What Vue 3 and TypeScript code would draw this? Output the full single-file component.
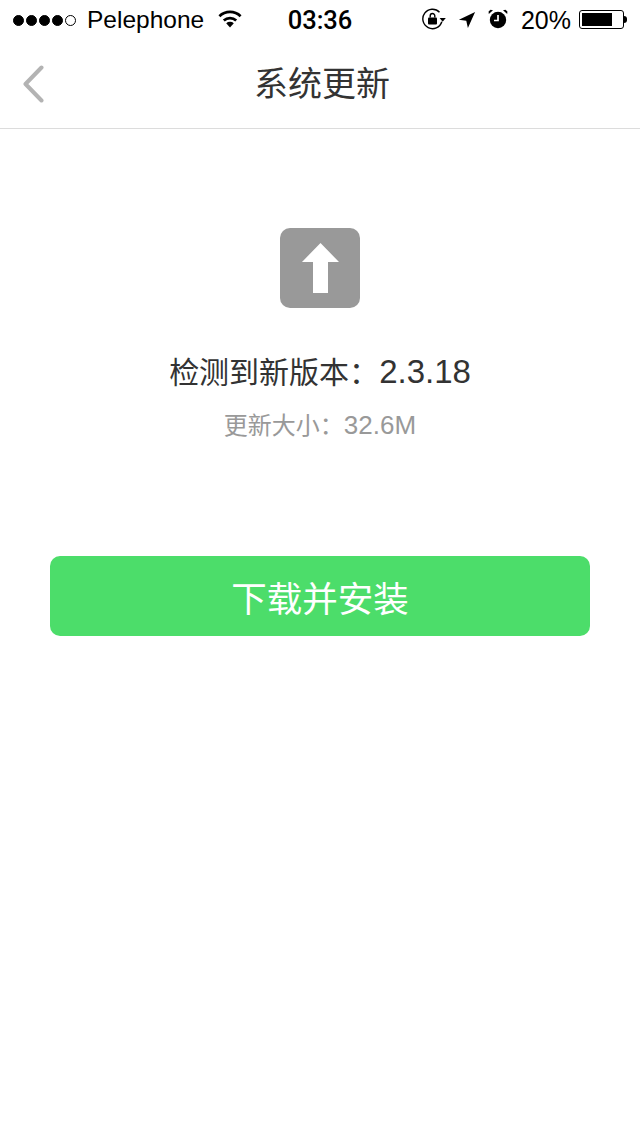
<script setup lang="ts">
const carrierDots = [true, true, true, true, false]
const version = '2.3.18'
const size = '32.6M'
</script>

<template>
  <div class="screen">
    <div class="status-bar">
      <div class="status-left">
        <div class="dots">
          <span v-for="(on, i) in carrierDots" :key="i" class="dot" :class="{ on }"></span>
        </div>
        <span class="carrier">Pelephone</span>
        <svg class="wifi" width="26" height="18" viewBox="0 0 26 18">
          <path d="M13 17.5 9.2 13.2a5.6 5.6 0 0 1 7.6 0Z" fill="#000" />
          <path d="M6.8 10.6a9 9 0 0 1 12.4 0" fill="none" stroke="#000" stroke-width="2.7" />
          <path d="M2.400 6.200a15.4 15.4 0 0 1 21.2 0" fill="none" stroke="#000" stroke-width="2.7" />
        </svg>
      </div>
      <div class="status-time">03:36</div>
      <div class="status-right">
        <svg class="lock" width="24" height="22" viewBox="0 0 24 22">
          <path d="M19.800 13.800A9.700 9.700 0 1 1 17.500 4.200" fill="none" stroke="#000" stroke-width="1.4" />
          <path d="M17.600 10h6.200l-3.100 3.800Z" fill="#000" />
          <rect x="6" y="9.500" width="9" height="7" rx="1" fill="#000" />
          <path d="M8.200 9.500V7.800a2.300 2.300 0 0 1 4.600 0V9.500" fill="none" stroke="#000" stroke-width="1.4" />
        </svg>
        <svg class="arrow" width="18" height="18" viewBox="0 0 20 20">
          <path d="M19 1 1 9.600l8.200 1.200L11 19Z" fill="#000" />
        </svg>
        <svg class="alarm" width="20" height="20" viewBox="0 0 20 20">
          <circle cx="10" cy="11" r="8.2" fill="#000" />
          <path d="M10 6v5.500H6" fill="none" stroke="#fff" stroke-width="1.7" />
          <path d="M.8 5 5 1.200 2.500.8.6 2.600ZM19.200 5 15 1.200l2.500-.4 1.900 1.800Z" fill="#000" />
        </svg>
        <span class="battery-text">20%</span>
        <div class="battery">
          <div class="battery-body"><div class="battery-level" :style="{ width: '78%' }"></div></div>
          <div class="battery-tip"></div>
        </div>
      </div>
    </div>

    <header class="nav">
      <svg class="back" width="22" height="38" viewBox="0 0 22 38">
        <path d="M19.5 2.500 3.500 19l16 16.500" fill="none" stroke="#b3b3b3" stroke-width="4" stroke-linecap="round" stroke-linejoin="round" />
      </svg>
      <h1 class="title">系统更新</h1>
    </header>

    <main class="content">
      <div class="update-icon">
        <svg width="38" height="50" viewBox="0 0 38 50">
          <path d="M19.500 0 38 19H27V50H12V19H1Z" fill="#fff" />
        </svg>
      </div>
      <p class="version">检测到新版本：<span class="version-num">{{ version }}</span></p>
      <p class="size">更新大小：<span class="size-num">{{ size }}</span></p>
      <button class="install" type="button">下载并安装</button>
    </main>
  </div>
</template>

<style>
html,
body {
  margin: 0;
  background: #fff;
}
</style>

<style scoped>
.screen {
  width: 640px;
  height: 1136px;
  overflow: hidden;
  background: #fff;
  font-family: "Liberation Sans", "Noto Sans CJK SC", sans-serif;
}

.status-bar {
  height: 40px;
  display: grid;
  grid-template-columns: 1fr auto 1fr;
  align-items: center;
  color: #000;
}

.status-left {
  display: flex;
  align-items: center;
  padding-left: 13px;
}

.dots {
  display: flex;
  gap: 2px;
}

.dot {
  width: 11px;
  height: 11px;
  box-sizing: border-box;
  border-radius: 50%;
  border: 1px solid #000;
}

.dot.on {
  background: #000;
}

.carrier {
  margin-left: 11px;
  font-size: 24.500px;
}

.wifi {
  margin-left: 13px;
  margin-top: -2px;
}

.status-time {
  font-family: Roboto, "Liberation Sans", sans-serif;
  font-size: 25.500px;
  font-weight: 500;
}

.status-right {
  display: flex;
  align-items: center;
  justify-content: flex-end;
  padding-right: 13px;
}

.lock {
  margin-top: -3px;
}

.arrow {
  margin-left: 12px;
}

.alarm {
  margin-left: 12px;
  margin-top: -2px;
}

.battery-text {
  margin-left: 13px;
  font-size: 25px;
}

.battery {
  display: flex;
  align-items: center;
  margin-left: 8px;
  margin-top: -1px;
}

.battery-body {
  width: 45px;
  height: 19px;
  box-sizing: border-box;
  border: 1px solid #000;
  border-radius: 3px;
  padding: 2px;
}

.battery-level {
  height: 100%;
  background: #000;
}

.battery-tip {
  width: 3px;
  height: 7px;
  background: #000;
  border-radius: 0 3px 3px 0;
}

.nav {
  position: relative;
  height: 89px;
  box-sizing: border-box;
  border-bottom: 1px solid #dcdcdc;
  padding: 0 0 5px 4px;
  display: flex;
  align-items: center;
  justify-content: center;
}

.back {
  position: absolute;
  left: 22px;
  top: 25px;
}

.title {
  margin: 0;
  font-size: 34px;
  font-weight: 400;
  color: #333;
}

.content {
  display: flex;
  flex-direction: column;
  align-items: center;
  padding-top: 99px;
}

.update-icon {
  width: 80px;
  height: 80px;
  border-radius: 10px;
  background: #999;
  display: flex;
  align-items: center;
  justify-content: center;
}

.version {
  margin: 44px 0 0;
  font-size: 30px;
  line-height: 40px;
  color: #333;
}

.version-num {
  font-size: 33px;
}

.size {
  margin: 17px 0 0;
  font-size: 24px;
  line-height: 30px;
  color: #999;
}

.size-num {
  font-size: 26px;
}

.install {
  margin-top: 115px;
  width: 540px;
  height: 80px;
  border: 0;
  border-radius: 10px;
  background: #4cdd6a;
  color: #fff;
  font-family: inherit;
  font-size: 35.500px;
  padding: 0;
}
</style>
